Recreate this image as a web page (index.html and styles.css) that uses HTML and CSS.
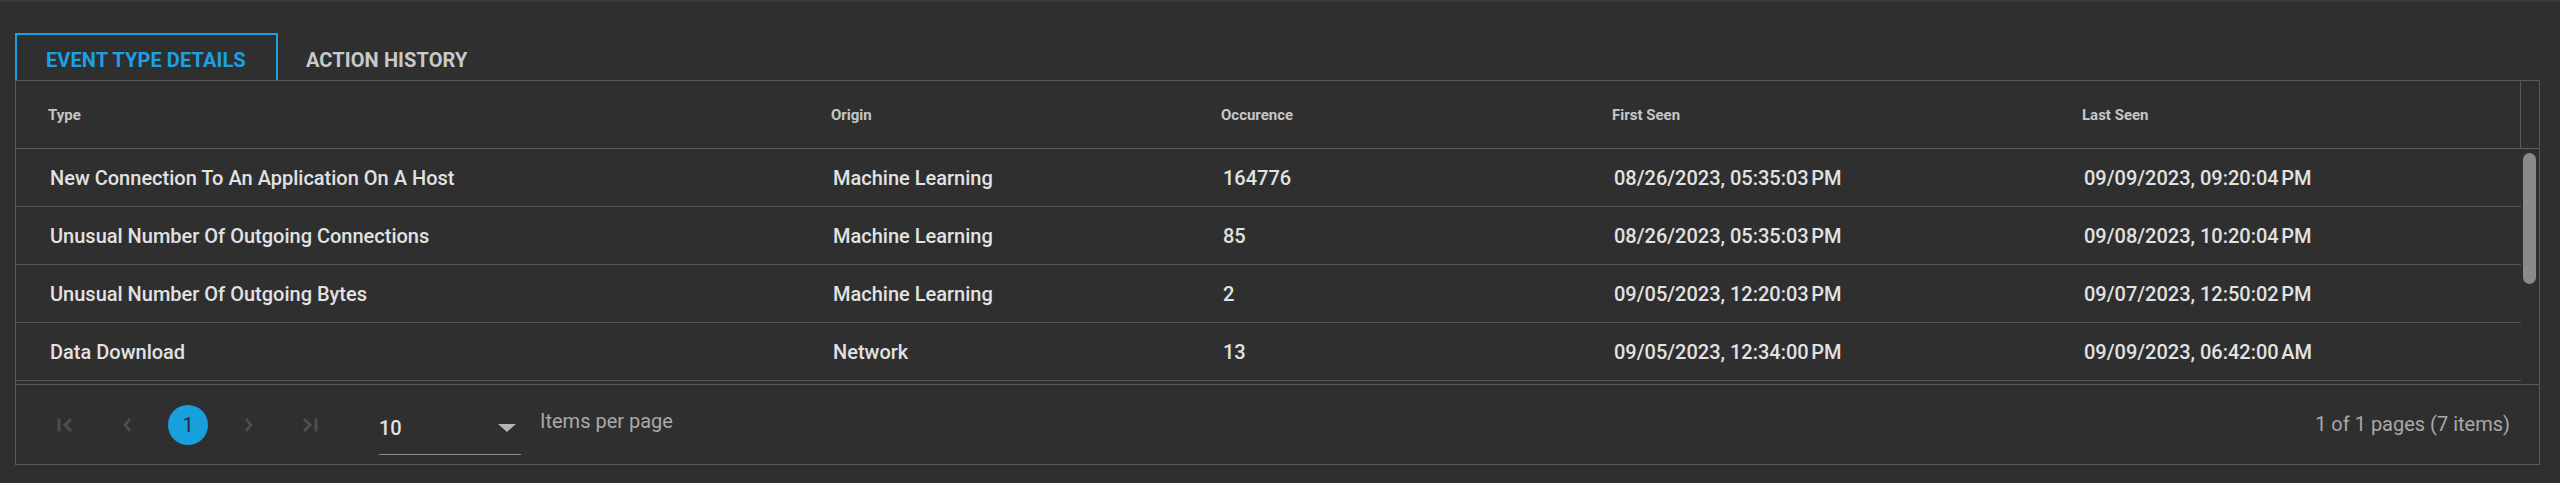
FILE: index.html
```html
<!DOCTYPE html>
<html>
<head>
<meta charset="utf-8">
<link rel="stylesheet" href="styles.css">
</head>
<body>
<div class="page">
  <div class="tabs">
    <div class="tab active">EVENT TYPE DETAILS</div>
    <div class="tab">ACTION HISTORY</div>
  </div>
  <div class="grid">
    <div class="head">
      <div class="cols head-cols">
        <div class="hcell">Type</div>
        <div class="hcell">Origin</div>
        <div class="hcell">Occurence</div>
        <div class="hcell">First Seen</div>
        <div class="hcell">Last Seen</div>
      </div>
      <div class="head-spacer"></div>
    </div>
    <div class="body">
      <div class="rows">
        <div class="cols row">
          <div class="cell">New Connection To An Application On A Host</div>
          <div class="cell">Machine Learning</div>
          <div class="cell">164776</div>
          <div class="cell">08/26/2023, 05:35:03&#8239;PM</div>
          <div class="cell">09/09/2023, 09:20:04&#8239;PM</div>
        </div>
        <div class="cols row">
          <div class="cell">Unusual Number Of Outgoing Connections</div>
          <div class="cell">Machine Learning</div>
          <div class="cell">85</div>
          <div class="cell">08/26/2023, 05:35:03&#8239;PM</div>
          <div class="cell">09/08/2023, 10:20:04&#8239;PM</div>
        </div>
        <div class="cols row">
          <div class="cell">Unusual Number Of Outgoing Bytes</div>
          <div class="cell">Machine Learning</div>
          <div class="cell">2</div>
          <div class="cell">09/05/2023, 12:20:03&#8239;PM</div>
          <div class="cell">09/07/2023, 12:50:02&#8239;PM</div>
        </div>
        <div class="cols row">
          <div class="cell">Data Download</div>
          <div class="cell">Network</div>
          <div class="cell">13</div>
          <div class="cell">09/05/2023, 12:34:00&#8239;PM</div>
          <div class="cell">09/09/2023, 06:42:00&#8239;AM</div>
        </div>
      </div>
      <div class="track"><div class="thumb"></div></div>
    </div>
    <div class="pager">
      <div class="nav">
        <span class="pbtn">
          <svg width="18" height="16" viewBox="0 0 18 16"><path d="M2 1.5v13" stroke="#4e4e4e" stroke-width="3" fill="none"/><path d="M14 2l-6 6 6 6" stroke="#4e4e4e" stroke-width="3" fill="none"/></svg>
        </span>
        <span class="pbtn">
          <svg width="10" height="16" viewBox="0 0 10 16"><path d="M8 2l-5 6 5 6" stroke="#4e4e4e" stroke-width="2.6" fill="none"/></svg>
        </span>
        <span class="pbtn current">1</span>
        <span class="pbtn">
          <svg width="10" height="16" viewBox="0 0 10 16"><path d="M2 2l5 6-5 6" stroke="#4e4e4e" stroke-width="2.6" fill="none"/></svg>
        </span>
        <span class="pbtn">
          <svg width="18" height="16" viewBox="0 0 18 16"><path d="M3 2l6 6-6 6" stroke="#4e4e4e" stroke-width="3" fill="none"/><path d="M15 1.5v13" stroke="#4e4e4e" stroke-width="3" fill="none"/></svg>
        </span>
      </div>
      <div class="dropdown">
        <span class="dd-value">10</span>
        <span class="dd-arrow"></span>
      </div>
      <div class="ipp">Items per page</div>
      <div class="info">1 of 1 pages (7 items)</div>
    </div>
  </div>
</div>
</body>
</html>
```

FILE: styles.css
```css
* { box-sizing: border-box; }

html, body {
  margin: 0;
  padding: 0;
}

body {
  background: #2f2f2f;
  border-top: 2px solid #3b3b3b;
  font-family: Roboto, "Liberation Sans", sans-serif;
  height: 483px;
  overflow: hidden;
}

.page {
  padding: 31px 20px 0 15px;
}

.tabs {
  display: flex;
  height: 47px;
}

.tab {
  font-size: 20px;
  font-weight: 700;
  line-height: 24px;
  color: #c9c9c9;
  padding: 15px 28px 6px 28px;
  letter-spacing: 0.1px;
}

.tab.active {
  width: 263px;
  color: #1ba1e2;
  border: 2px solid #1ba1e2;
  border-bottom: none;
  padding-left: 29px;
  padding-top: 13px;
}

.grid {
  border: 1px solid #5a5a5a;
  width: 2525px;
}

.head {
  display: flex;
  height: 68px;
  border-bottom: 1px solid #5a5a5a;
}

.cols {
  display: grid;
  grid-template-columns: 783px 390px 391px 470px 1fr;
  align-items: center;
}

.head-cols {
  flex: 1;
}

.hcell {
  padding-left: 32px;
  font-size: 15px;
  font-weight: 700;
  color: #c6c6c6;
}

.head-spacer {
  width: 19px;
  border-left: 1px solid #5a5a5a;
}

.body {
  display: flex;
  height: 235px;
  overflow: hidden;
}

.rows {
  width: 2505px;
}

.row {
  height: 58px;
  border-bottom: 1px solid #555;
}

.cell {
  padding-left: 34px;
  font-size: 20px;
  font-weight: 500;
  color: #e2e2e2;
  white-space: nowrap;
}

.track {
  width: 18px;
  padding: 4px 0 0 2px;
}

.thumb {
  width: 13px;
  height: 131px;
  border-radius: 7px;
  background: #8a8a8a;
}

.pager {
  display: flex;
  align-items: center;
  height: 80px;
  border-top: 1px solid #5a5a5a;
  padding: 0 29px 0 30px;
}

.nav {
  display: flex;
  align-items: center;
  gap: 21px;
}

.pbtn {
  width: 40px;
  height: 40px;
  display: flex;
  align-items: center;
  justify-content: center;
}

.pbtn.current {
  border-radius: 50%;
  background: #179fde;
  color: #1d2b34;
  font-size: 20px;
}

.dropdown {
  margin-left: 49px;
  width: 142px;
  height: 61px;
  display: flex;
  align-items: center;
  justify-content: space-between;
  padding: 8px 5px 0 0;
  border-bottom: 1px solid #8a8a8a;
}

.dd-value {
  font-size: 20px;
  font-weight: 500;
  color: #e2e2e2;
}

.dd-arrow {
  width: 0;
  height: 0;
  border-left: 9.5px solid transparent;
  border-right: 9.5px solid transparent;
  border-top: 8px solid #b5b5b5;
}

.ipp {
  margin-left: 19px;
  margin-bottom: 8px;
  font-size: 20px;
  color: #a9a9a9;
}

.info {
  margin-left: auto;
  margin-bottom: 2px;
  font-size: 20px;
  color: #a9a9a9;
}
```
